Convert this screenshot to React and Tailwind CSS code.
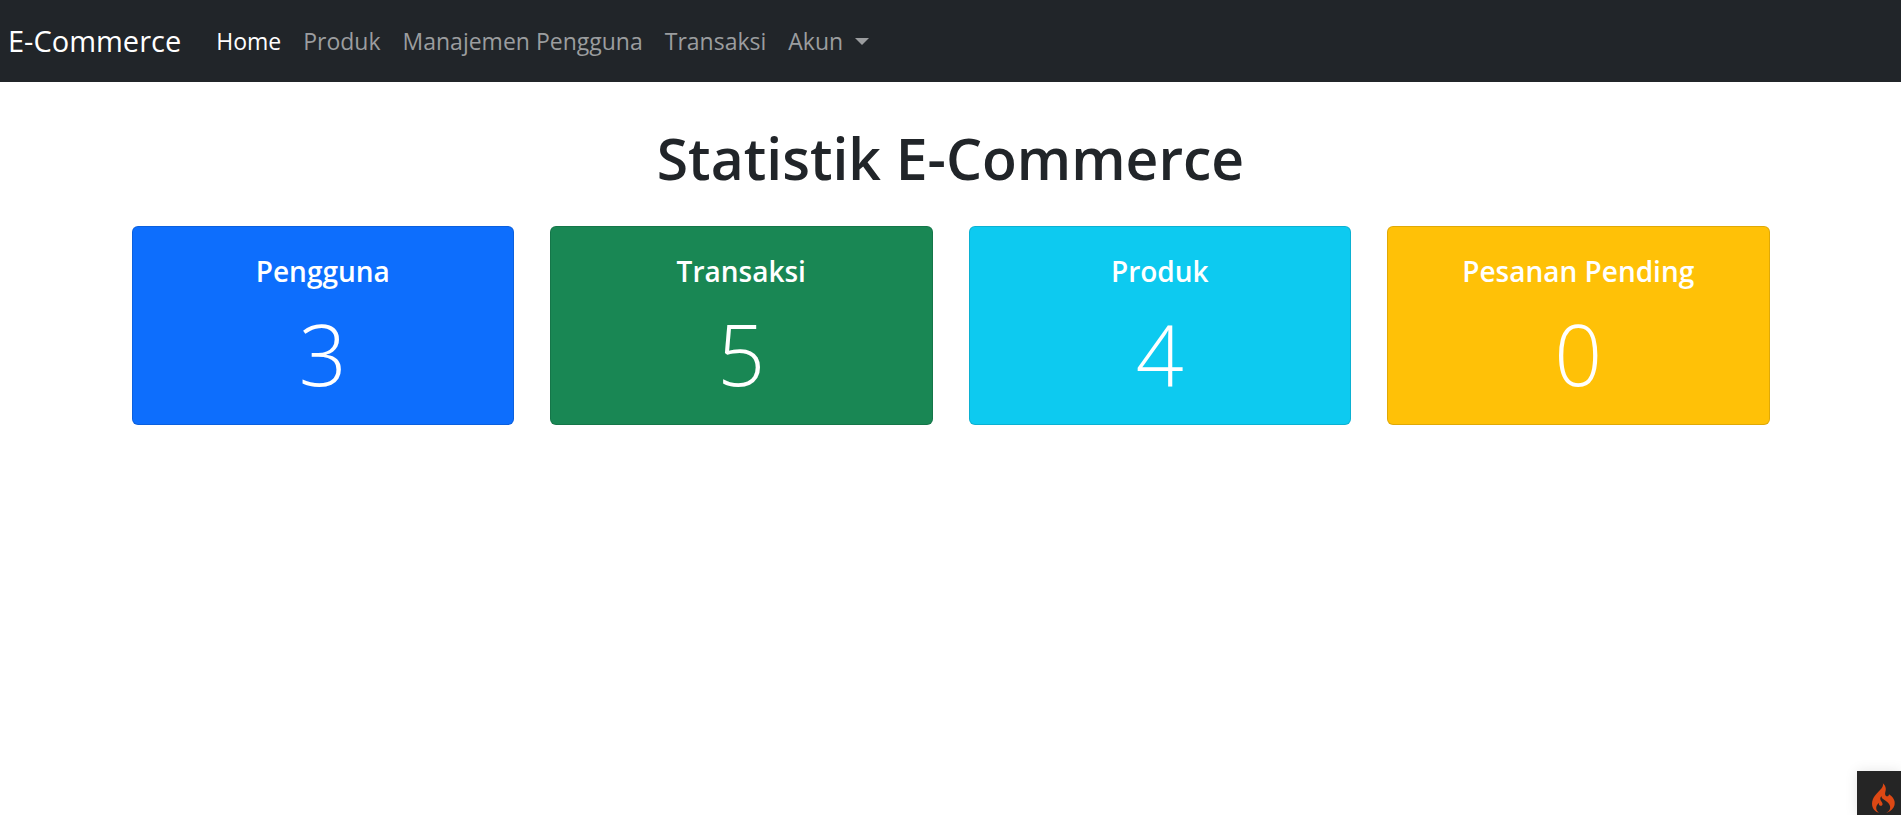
const links = ["Produk", "Manajemen Pengguna", "Transaksi"];

const stats = [
  { label: "Pengguna", value: 3, color: "bg-[#0d6efd]" },
  { label: "Transaksi", value: 5, color: "bg-[#198754]" },
  { label: "Produk", value: 4, color: "bg-[#0dcaf0]" },
  { label: "Pesanan Pending", value: 0, color: "bg-[#ffc107]" },
];

function Navbar() {
  return (
    <nav className="flex h-[82px] items-center bg-[#212529] px-2 text-[23px] leading-9 text-[#9b9d9f]">
      <a href="#" className="mr-6 text-[29px] text-white">E-Commerce</a>
      <ul className="flex items-center">
        <li className="px-[11px]">
          <a href="#" aria-current="page" className="text-white">Home</a>
        </li>
        {links.map((name) => (
          <li key={name} className="px-[11px]">
            <a href="#" className="hover:text-white">{name}</a>
          </li>
        ))}
        <li className="px-[11px]">
          <button type="button" aria-haspopup="true" className="flex items-center gap-3">
            Akun
            <span className="border-x-[7px] border-t-[7px] border-x-transparent border-t-current" />
          </button>
        </li>
      </ul>
    </nav>
  );
}

function StatCard({ label, value, color }) {
  return (
    <section className={`rounded-md border border-black/12 px-6 pt-[26px] pb-5 text-center text-white ${color}`}>
      <h2 className="mb-3.5 text-[28px] leading-9 font-semibold">{label}</h2>
      <p className="text-[84px] leading-[101px] font-light">{value}</p>
    </section>
  );
}

function FlameIcon({ className }) {
  return (
    <svg viewBox="0 0 155 200" fill="currentColor" aria-hidden="true" className={className}>
      <path d="M73.7 3.7c2.2 7.9-.7 18.5-7.8 29-1.8 2.6-10.7 12.2-19.7 21.3-23.9 24-33.6 37.1-40.3 54.4-7.9 20.6-7.8 40.8.5 58.2C12.8 180 27.6 193 42.5 198l6 2-3-2.2c-21-15.2-22.9-38.7-4.8-58.8 2.5-2.7 4.8-5 5.1-5 .4 0 .7 2.7.7 6.1 0 5.7.2 6.2 3.7 9.5 3 2.7 4.6 3.4 7.8 3.4 5.6 0 9.9-2.4 11.6-6.5 2.9-6.9 1.6-12-5-20.5-10.5-13.4-11.7-23.3-4.3-34.7l3.1-4.8.7 4.7c1.3 8.2 5.8 12.9 25 25.8 20.9 14.1 30.6 26.1 32.8 40.5 1.1 7.2-.1 16.1-3.1 21.8-2.7 5.3-11.2 14.3-16.5 17.4-2.4 1.4-4.3 2.6-4.3 2.8 0 .2 2.4-.4 5.3-1.4 24.1-8.3 42.7-27.1 48.2-48.6 1.9-7.6 1.9-20.2-.1-28.5-3.5-15.2-14.6-30.5-29.9-41.2l-7-4.9-.6 3.3c-.8 4.8-2.6 7.6-5.9 9.3-4.5 2.3-10.3 1.9-13.8-1-6.7-5.7-7.8-14.6-3.7-30.5 3-11.6 3.2-20.6.5-29.1C88.3 18 80.6 6.3 74.8 2.2 73.1.9 73 1 73.7 3.7z" />
    </svg>
  );
}

export default function App() {
  return (
    <div className="min-h-screen bg-white font-['Open_Sans','Noto_Sans',sans-serif] text-[#212529]">
      <Navbar />
      <main className="mx-auto max-w-[1710px] px-9 pt-10">
        <h1 className="mb-8 text-center text-[57px] leading-[72px] font-semibold">Statistik E-Commerce</h1>
        <div className="grid grid-cols-4 gap-9">
          {stats.map((s) => (
            <StatCard key={s.label} {...s} />
          ))}
        </div>
      </main>
      <button
        type="button"
        aria-label="Debug toolbar"
        className="fixed right-0 bottom-0 flex size-11 items-end justify-end bg-[#252525] pr-1.5 pb-0.5 text-[#dd4814] shadow-[0_0_12px_rgba(0,0,0,0.1)]"
      >
        <FlameIcon className="h-[30px] w-[23px]" />
      </button>
    </div>
  );
}
